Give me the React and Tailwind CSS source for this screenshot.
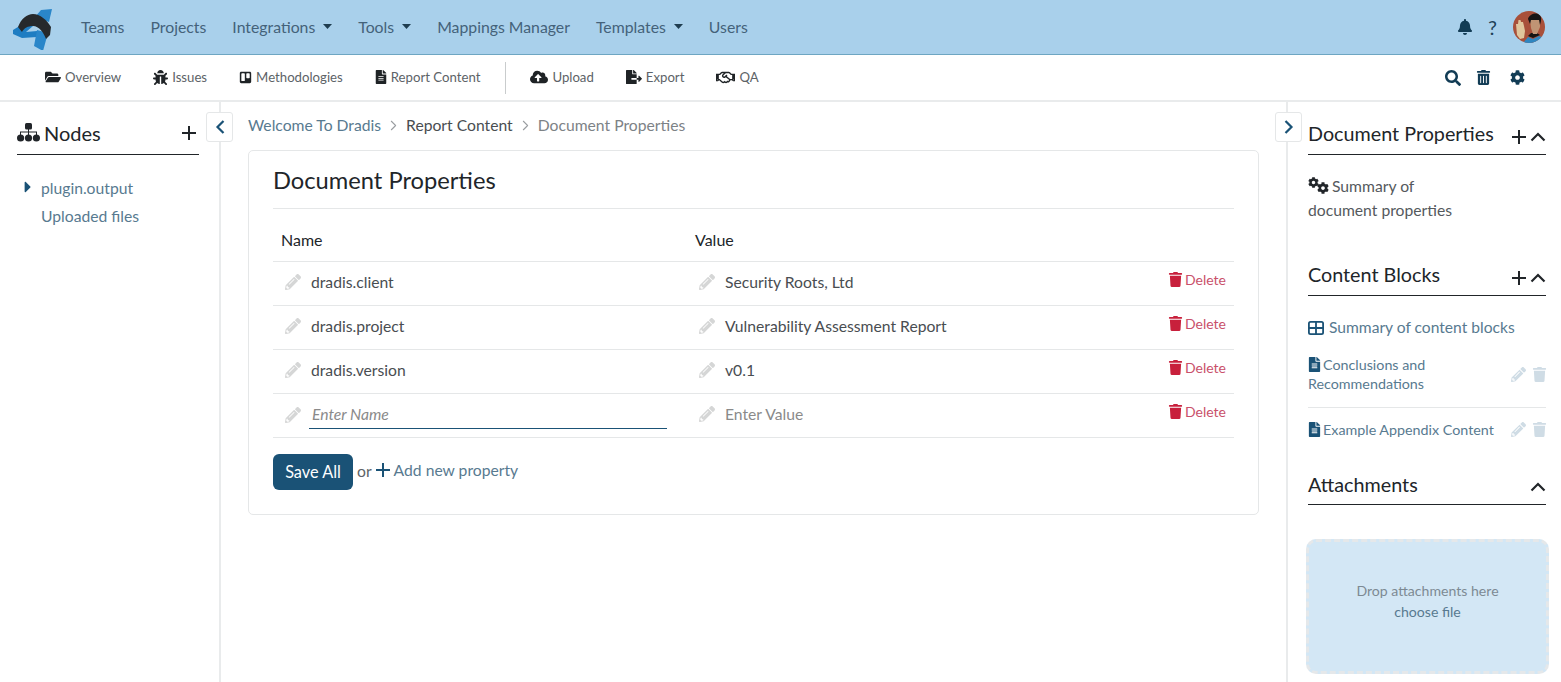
import { ChevronRight } from 'lucide-react';
import {
  FaFolderOpen, FaBug, FaTrello, FaFileAlt, FaCloudUploadAlt, FaFileExport, FaRegHandshake, FaSearch,
  FaCog, FaBell, FaPencilAlt, FaTrash, FaCaretRight, FaTrashAlt,
} from 'react-icons/fa';

function Logo() {
  return (
    <svg width="42" height="46" viewBox="12 4 42 46">
      <path d="M41 10 L52 9 L49 22 L35 17 Z" fill="#2a86c9" />
      <path d="M13 30 L26 22 L33 26 L26 32 L37 31 L37 37 L22 38 L13 34 Z" fill="#1f7dc2" />
      <path d="M37 30 L48 33 L43 51 L34 46 Z" fill="#2a86c9" />
      <path d="M18 27 C21 19 27 14 33 14 C40 14 47 20 51 27 L50 35 L46 39 C44 33 39 26 33 26 C28 26 24 28 22 32 Z" fill="#26292c" />
    </svg>
  );
}

function Avatar() {
  return (
    <svg width="32" height="32" viewBox="0 0 32 32" className="ml-[16px]">
      <clipPath id="av"><circle cx="16" cy="16" r="16" /></clipPath>
      <g clipPath="url(#av)">
        <rect width="32" height="32" fill="#a8503a" />
        <path d="M10 32 L15 26 L20 28 L26 25 L32 27 L32 32 Z" fill="#2f86c0" />
        <path d="M15 25 L20 27 L27 24 L24 22 L18 22 Z" fill="#141414" />
        <path d="M17 9 L27 9 L27 16 L24 23 L20 23 L18 17 Z" fill="#c09474" />
        <path d="M15 8 C16 3 24 1 27 4 C29 7 28 11 27 14 L26 9 L18 9 L17 13 Z" fill="#171515" />
        <path d="M4 24 L3 13 L5 13 L5.5 9 L7.5 9 L8 11 L10 11 L11 15 L12 20 L11 27 L7 28 Z" fill="#e0c69c" />
      </g>
    </svg>
  );
}

function Caret() {
  return (
    <svg width="9" height="5" viewBox="0 0 9 5" className="text-[#1f3d50]">
      <path d="M0 0 H9 L4.5 5 Z" fill="currentColor" />
    </svg>
  );
}

function PlusIcon({ className }) {
  return (
    <svg width="14" height="14" viewBox="0 0 14 14" className={className}>
      <path d="M7 0 V14 M0 7 H14" stroke="currentColor" strokeWidth="2" fill="none" />
    </svg>
  );
}

function ChevUp() {
  return (
    <svg width="16" height="10" viewBox="0 0 16 10">
      <path d="M1.5 8.5 L8 2 L14.5 8.5" stroke="currentColor" strokeWidth="2.2" fill="none" />
    </svg>
  );
}

function ChevSide({ left }) {
  return (
    <svg width="10" height="14" viewBox="0 0 10 14">
      <path d={left ? 'M8.5 1 L2.5 7 L8.5 13' : 'M1.5 1 L7.5 7 L1.5 13'} stroke="currentColor" strokeWidth="2.2" fill="none" />
    </svg>
  );
}

function NodesIcon() {
  return (
    <svg width="23" height="19" viewBox="0 0 23 19" fill="currentColor">
      <rect x="8" y="0" width="7" height="6.5" rx="1.5" />
      <path d="M11 6 H12 V8.5 H20 V12 H19 V9.5 H12 V12 H11 V9.5 H4 V12 H3 V8.5 H11 Z" />
      <circle cx="3.6" cy="15" r="3.6" />
      <circle cx="11.5" cy="15" r="3.6" />
      <circle cx="19.4" cy="15" r="3.6" />
    </svg>
  );
}

function TableIcon() {
  return (
    <svg width="16" height="14" viewBox="0 0 16 14" className="text-[#1a5276]">
      <rect x="0.9" y="0.9" width="14.2" height="12.2" rx="1.6" fill="none" stroke="currentColor" strokeWidth="1.8" />
      <path d="M8 1 V13 M1 7 H15" stroke="currentColor" strokeWidth="1.8" />
    </svg>
  );
}

function GearsIcon() {
  return (
    <span className="relative inline-block w-[20px] h-[16px] mr-[4px] align-[-1px]">
      <FaCog size={11} className="absolute left-0 top-0 text-[#212529]" />
      <FaCog size={12} className="absolute left-[9px] top-[5px] text-[#212529]" />
    </span>
  );
}

function TopLink({ label, caret }) {
  return (
    <span className="flex items-center gap-[8px] text-[15.8px] pb-[1px] text-[#44627a]">
      {label}
      {caret && <Caret />}
    </span>
  );
}

function SubLink({ icon: Icon, label, size = 15, iconClass = '' }) {
  return (
    <span className="flex items-center gap-[4px] text-[13.2px] text-[#5d6367]">
      <Icon size={size} className={'text-[#1f2326] ' + iconClass} />
      {label}
    </span>
  );
}

function PropRow({ name, value, editing }) {
  return (
    <div className="grid grid-cols-[414px_1fr_auto] items-center h-[44px] border-b border-[#e5e7e8] pl-[12px] pr-[8px] text-[15.7px] pb-[2px]">
      <div className="flex items-center gap-[10px]">
        <FaPencilAlt size={16} className="text-[#d5d6d6]" />
        {editing ? (
          <span className="italic text-[#8a8a8a] w-[358px] -ml-[2px] -mt-[2px] pl-[3px] h-[30px] leading-[30px] border-b border-[#1a5276]">Enter Name</span>
        ) : (
          <span className="text-[#494d51]">{name}</span>
        )}
      </div>
      <div className="flex items-center gap-[10px]">
        <FaPencilAlt size={16} className="text-[#d5d6d6]" />
        <span className={value === 'Enter Value' ? 'text-[#8a8a8a]' : 'text-[#494d51]'}>{value}</span>
      </div>
      <span className="flex items-center gap-[2px] text-[14px] text-[#c9506a] -mt-[7px]">
        <FaTrash size={15} className="text-[#c8203c]" />
        Delete
      </span>
    </div>
  );
}

function SideHead({ title, plus }) {
  return (
    <div className="flex items-center justify-between h-[44px] border-b border-[#212529] pt-[3px] text-[#212529]">
      <span className="text-[19.75px]">{title}</span>
      <span className="flex items-center gap-[4px] mt-[5px]">
        {plus && <PlusIcon />}
        <ChevUp />
      </span>
    </div>
  );
}

function BlockRow({ label, children, border }) {
  return (
    <div className={border ? 'flex items-center justify-between border-b border-[#e5e7e8] pb-[14px]' : 'flex items-center justify-between'}>
      <div className="text-[14.3px] leading-[19px] text-[#587a90]">
        <FaFileAlt size={15} className="inline text-[#1a5276] mr-[1px] -ml-[1px] -mt-[4px]" />
        {label}
        {children}
      </div>
      <span className="flex items-center gap-[6px] -mr-[1px]">
        <FaPencilAlt size={15} className="text-[#cfdce5]" />
        <FaTrash size={15} className="text-[#cfdce5]" />
      </span>
    </div>
  );
}

export default function App() {
  return (
    <div className="h-[682px] w-[1561px] overflow-hidden bg-white flex flex-col font-['Lato','Liberation_Sans',sans-serif]">
      <div className="h-[55px] shrink-0 bg-[#a9d0eb] border-b border-[#6ea6c2] flex items-center pl-[12px] pr-[16px]">
        <Logo />
        <nav className="flex items-center gap-[26px] ml-[27px]">
          <TopLink label="Teams" />
          <TopLink label="Projects" />
          <TopLink label="Integrations" caret />
          <TopLink label="Tools" caret />
          <TopLink label="Mappings Manager" />
          <TopLink label="Templates" caret />
          <TopLink label="Users" />
        </nav>
        <div className="ml-auto flex items-center text-[#123c55]">
          <FaBell size={16} />
          <span className="ml-[15px] text-[20px] leading-none text-[#1f4057]">?</span>
          <Avatar />
        </div>
      </div>

      <div className="h-[47px] shrink-0 border-b-2 border-[#e9ebec] flex items-center pl-[45px] pr-[36px]">
        <div className="flex items-center gap-[32px]">
          <SubLink icon={FaFolderOpen} label="Overview" size={16} />
          <SubLink icon={FaBug} label="Issues" />
          <SubLink icon={FaTrello} label="Methodologies" size={13} />
          <SubLink icon={FaFileAlt} label="Report Content" size={14} iconClass="-mx-[1px]" />
        </div>
        <div className="w-px h-[32px] bg-[#c9cccd] ml-[25px] mr-[24px]" />
        <div className="flex items-center gap-[32px]">
          <SubLink icon={FaCloudUploadAlt} label="Upload" size={18} />
          <SubLink icon={FaFileExport} label="Export" size={16} />
          <SubLink icon={FaRegHandshake} label="QA" size={19} />
        </div>
        <div className="ml-auto flex items-center text-[#123c55]">
          <FaSearch size={16} />
          <FaTrashAlt size={15} className="ml-[15px]" />
          <FaCog size={15} className="ml-[19px]" />
        </div>
      </div>

      <div className="flex-1 flex min-h-0">
        <aside className="relative w-[221px] shrink-0 border-r-2 border-[#e9ebec] pl-[17px] pr-[20px]">
          <div className="flex items-center justify-between h-[53px] border-b border-[#212529] pt-[9px] text-[#212529]">
            <span className="flex items-center gap-[4px] text-[20px]">
              <NodesIcon />
              Nodes
            </span>
            <PlusIcon className="mr-[3px]" />
          </div>
          <div className="mt-[21px] text-[15.7px] text-[#587a90]">
            <div className="relative pl-[24px] h-[28px] leading-[24px]">
              <FaCaretRight size={18} className="absolute left-[2px] top-[2px] text-[#1a5276]" />
              plugin.output
            </div>
            <div className="pl-[24px] h-[28px] leading-[24px]">Uploaded files</div>
          </div>
          <button className="absolute left-[206px] top-[10px] w-[27px] h-[30px] bg-white border border-[#e5e7e8] rounded-[3px] flex items-center justify-center text-[#1a5276]">
            <ChevSide left />
          </button>
        </aside>

        <main className="flex-1 pl-[27px] pr-[27px] min-w-0">
          <div className="flex items-center h-[48px] text-[15.7px] pb-[1px]">
            <span className="text-[#587a90]">Welcome To Dradis</span>
            <ChevronRight size={17} strokeWidth={1.5} className="mx-[4px] text-[#9a9ea1]" />
            <span className="text-[#494d51]">Report Content</span>
            <ChevronRight size={17} strokeWidth={1.5} className="mx-[4px] text-[#9a9ea1]" />
            <span className="text-[#7d8286]">Document Properties</span>
          </div>
          <section className="h-[365px] border border-[#e5e7e8] rounded-[5px] px-[24px]">
            <h1 className="text-[23.7px] h-[58px] pt-[13px] leading-[32px] text-[#212529] border-b border-[#e5e7e8]">Document Properties</h1>
            <div className="grid grid-cols-[414px_1fr] items-center h-[53px] pl-[8px] pt-[10px] border-b border-[#e5e7e8] text-[16px] text-[#212529]">
              <span>Name</span>
              <span>Value</span>
            </div>
            <PropRow name="dradis.client" value="Security Roots, Ltd" />
            <PropRow name="dradis.project" value="Vulnerability Assessment Report" />
            <PropRow name="dradis.version" value="v0.1" />
            <PropRow editing value="Enter Value" />
            <div className="flex items-center mt-[16px] text-[15.7px]">
              <button className="w-[80px] h-[36px] rounded-[6px] bg-[#1a5276] text-white text-[16.3px]">Save All</button>
              <span className="ml-[4px] text-[#5d6367]">or</span>
              <PlusIcon className="ml-[4px] -mt-[4px] text-[#1a5276]" />
              <span className="ml-[4px] -mt-[2px] text-[#587a90]">Add new property</span>
            </div>
          </section>
        </main>

        <aside className="relative w-[275px] shrink-0 border-l-2 border-[#e9ebec] pl-[20px] pr-[15px]">
          <button className="absolute -left-[13px] top-[10px] w-[27px] h-[30px] bg-white border border-[#e5e7e8] rounded-[3px] flex items-center justify-center text-[#1a5276]">
            <ChevSide />
          </button>
          <div className="pt-[9px]">
            <SideHead title="Document Properties" plus />
          </div>
          <div className="mt-[19px] text-[15.7px] leading-[24px] text-[#55595d]">
            <GearsIcon />
            Summary of<br />document properties
          </div>
          <div className="mt-[30px]">
            <SideHead title="Content Blocks" plus />
          </div>
          <div className="mt-[20px] flex items-center gap-[5px] text-[15.6px] text-[#587a90]">
            <TableIcon />
            Summary of content blocks
          </div>
          <div className="mt-[16px]">
            <BlockRow label="Conclusions and" border><br />Recommendations</BlockRow>
          </div>
          <div className="mt-[12px]">
            <BlockRow label="Example Appendix Content" />
          </div>
          <div className="mt-[22px]">
            <SideHead title="Attachments" />
          </div>
          <div className="-ml-[2px] -mr-[3px] mt-[34px] h-[135px] border-[3px] border-dashed border-[#e5e8ea] rounded-[10px] bg-[#d3e7f5] flex flex-col items-center justify-center pb-[12px] text-[14.1px] leading-[21px]">
            <span className="text-[#7d8a93]">Drop attachments here</span>
            <span className="text-[#587a90]">choose file</span>
          </div>
        </aside>
      </div>
    </div>
  );
}
